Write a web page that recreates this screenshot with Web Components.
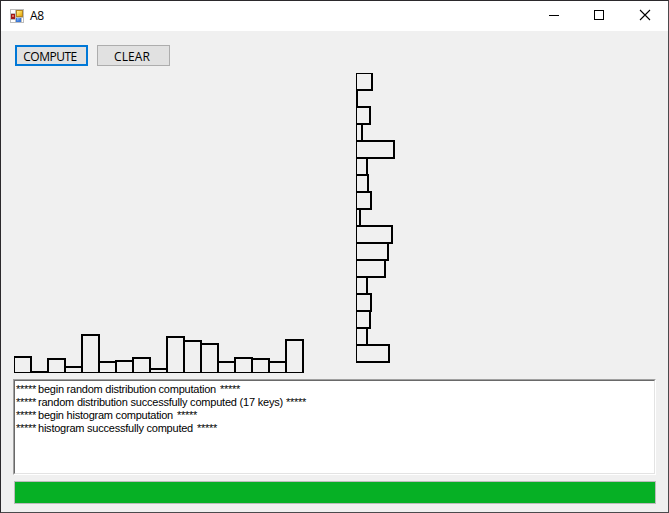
<!DOCTYPE html>
<html lang="en"><head><meta charset="utf-8"><title>A8</title>
<style>html,body{margin:0;height:100%;overflow:hidden;background:#f0f0f0}body{font-family:"Liberation Sans",Arial,sans-serif;color:#000}</style></head>
<body>
<app-window caption="A8">
  <div slot="tools" style="display:contents">
    <push-button primary><fit-text w="53.5">COMPUTE</fit-text></push-button>
    <push-button><fit-text w="36">CLEAR</fit-text></push-button>
  </div>
  <bar-chart slot="charts" values="16,1,14,6,38,11,12,15,4,36,32,29,11,15,14,11,33"></bar-chart>
  <bar-chart slot="charts" vertical values="16,1,14,6,38,11,12,15,4,36,32,29,11,15,14,11,33"></bar-chart>
  <log-box slot="log">
    <log-line w="178" gap="4">begin random distribution computation</log-line>
    <log-line w="245" gap="3">random distribution successfully computed (17 keys)</log-line>
    <log-line w="135" gap="4">begin histogram computation</log-line>
    <log-line w="155" gap="4">histogram successfully computed</log-line>
  </log-box>
  <progress-bar slot="progress"></progress-bar>
</app-window>
<script>
const root=(el,html)=>{const r=el.attachShadow({mode:'open'});r.innerHTML=html;return r;};

customElements.define('app-icon',class extends HTMLElement{
  connectedCallback(){root(this,`<style>:host{display:block;width:14px;height:14px}svg{display:block}</style>
  <svg width="14" height="14" viewBox="0 0 14 14" shape-rendering="crispEdges">
  <defs><linearGradient id="y" x2="1" y2="1"><stop stop-color="#fff2a0"/><stop offset=".5" stop-color="#f8cf3f"/><stop offset="1" stop-color="#e0a010"/></linearGradient>
  <linearGradient id="b" x2="1" y2="1"><stop stop-color="#8fc0ff"/><stop offset="1" stop-color="#2f6bd0"/></linearGradient></defs>
  <rect width="14" height="14" fill="#bdbdbd"/><rect x="1" y="1" width="4" height="3" fill="#fff"/><rect x="1" y="11" width="4" height="2" fill="#fff"/><rect x="12" y="9" width="1" height="4" fill="#fff"/>
  <rect x="6" y="1" width="7" height="7" fill="#b38420"/><rect x="7" y="2" width="5" height="5" fill="url(#y)"/>
  <rect x="1" y="5" width="4" height="5" fill="#a01818"/><rect x="2" y="6" width="2" height="2" fill="#e07060"/>
  <rect x="6" y="9" width="5" height="4" fill="#3b78d8"/><rect x="7" y="9" width="3" height="3" fill="url(#b)"/></svg>`);}
});
customElements.define('title-bar',class extends HTMLElement{
  connectedCallback(){root(this,`<style>:host{display:flex;height:30px;background:#fff;align-items:center;padding-left:9px;box-sizing:border-box}
  app-icon{margin-right:6px;margin-top:-1px}.t{font:12px/16px "Open Sans","Noto Sans",sans-serif;flex:1}svg{display:block;width:46px;height:30px}.last{width:45px}</style>
  <app-icon></app-icon><span class="t"><fit-text w="14">${this.getAttribute('caption')}</fit-text></span>
  <svg viewBox="0 0 46 30"><path d="M18 14.5h10" stroke="#000"/></svg>
  <svg viewBox="0 0 46 30"><rect x="17.5" y="9.5" width="9" height="9" fill="none" stroke="#000"/></svg>
  <svg class="last" viewBox="0 0 45 30"><path d="M17 9l10 10M27 9l-10 10" stroke="#000" stroke-width="1.1"/></svg>`);}
});
customElements.define('push-button',class extends HTMLElement{
  connectedCallback(){root(this,`<style>:host{display:flex;box-sizing:border-box;width:73px;height:21px;border:1px solid #adadad;background:#e1e1e1;align-items:center;justify-content:center;font:12px/15px "Open Sans",sans-serif;padding:1px 3px 0 0}
  :host([primary]){border:2px solid #0078d7}</style><slot></slot>`);}
});
// Outlined bars on a 17px pitch; the outer half of strokes is clipped at the axes.
customElements.define('bar-chart',class extends HTMLElement{
  connectedCallback(){
    const v=this.getAttribute('values').split(',').map(Number),vert=this.hasAttribute('vertical');
    const w=300,h=300;
    const bars=v.map((n,i)=>vert?`<rect x="0" y="${i*17}" width="${n}" height="17"/>`:`<rect x="${i*17}" y="${h-n}" width="17" height="${n}"/>`).join('');
    root(this,`<style>:host{display:block}svg{display:block;overflow:hidden}</style><svg width="${w}" height="${h}" fill="none" stroke="#000" stroke-width="2" shape-rendering="crispEdges">${bars}</svg>`);
  }
});
customElements.define('log-line',class extends HTMLElement{
  connectedCallback(){root(this,`<style>:host{display:flex;height:13px;line-height:13px}.a{margin-right:2px}.z{margin-left:${this.getAttribute('gap')}px}.a,.z{line-height:12px}</style>
  <fit-text class="a" w="20">*****</fit-text><fit-text w="${this.getAttribute('w')}">${this.textContent}</fit-text><fit-text class="z" w="20">*****</fit-text>`);}
});
customElements.define('log-box',class extends HTMLElement{
  connectedCallback(){root(this,`<style>:host{display:block;box-sizing:border-box;height:96px;background:#fff;border:1px solid;border-color:#a0a0a0 #fff #fff #a0a0a0;font-size:11px}
  .in{box-sizing:border-box;height:94px;border:1px solid;border-color:#696969 #e3e3e3 #e3e3e3 #696969;padding:2px 0 0 1px}</style><div class="in"><slot></slot></div>`);}
});
customElements.define('progress-bar',class extends HTMLElement{
  connectedCallback(){root(this,`<style>:host{display:block;box-sizing:border-box;height:23px;border:1px solid #bcbcbc;background:#06b025}</style>`);}
});
customElements.define('app-window',class extends HTMLElement{
  connectedCallback(){root(this,`<style>:host{display:flex;flex-direction:column;box-sizing:border-box;width:669px;height:513px;border:1px solid #2b292c;border-right-color:#4b4a4c;border-bottom-color:#4b4a4c;background:#f0f0f0}
  .tools{display:flex;gap:9px;padding:14px 0 0 14px}.charts{display:flex;gap:42px;padding:7px 0 0 13px}.log{padding:6px 12px 0 12px}.prog{padding:6px 12px 0 13px}</style>
  <title-bar caption="${this.getAttribute('caption')}"></title-bar>
  <div class="tools"><slot name="tools"></slot></div><div class="charts"><slot name="charts"></slot></div>
  <div class="log"><slot name="log"></slot></div><div class="prog"><slot name="progress"></slot></div>`);}
});
// Text whose letter spacing is adjusted to a given advance width.
// Registered last: it measures with the fonts its containers set.
customElements.define('fit-text',class extends HTMLElement{
  connectedCallback(){
    if(this.shadowRoot)return;
    root(this,`<style>:host{display:inline-block;white-space:pre;flex:none}</style><slot></slot>`);
    const w=+this.getAttribute('w'),n=this.textContent.length;
    const now=this.getBoundingClientRect().width;
    this.style.letterSpacing=((w-now)/n)+'px';
    this.style.width=w+'px';
  }
});
</script>
</body></html>
